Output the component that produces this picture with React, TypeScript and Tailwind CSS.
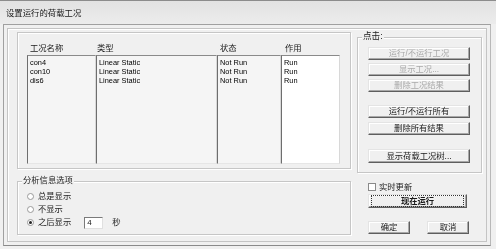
const FONT = '"Liberation Sans", "Noto Sans CJK SC", sans-serif'

type BtnProps = { label: string; disabled?: boolean; focused?: boolean; className?: string }

function WinButton({ label, disabled, focused, className = '' }: BtnProps) {
  return (
    <div
      className={`flex items-center justify-center border border-t-[#e4e4e4] border-l-[#e4e4e4] border-r-[#5e5e5e] border-b-[#5e5e5e] bg-[#f0f0f0] shadow-[inset_-1px_-1px_0_#a8a8a8,inset_1px_1px_0_#ffffff] ${className}`}
    >
      <div
        className={`flex h-full w-full items-center justify-center text-[8.3px] leading-none ${
          disabled ? 'text-[#a9a9a9]' : 'text-[#1a1a1a]'
        } ${focused ? 'm-[2px] border border-dotted border-[#333]' : ''}`}
      >
        {label}
      </div>
    </div>
  )
}

function Radio({ checked, label }: { checked?: boolean; label: string }) {
  return (
    <div className="flex h-[13px] items-center">
      <div className="ml-[9px] flex h-[7px] w-[7px] items-center justify-center rounded-full border border-[#9a9a9a] bg-white">
        {checked && <div className="h-[3px] w-[3px] rounded-full bg-[#222]" />}
      </div>
      <span className="ml-[4px] text-[8.3px] leading-none text-[#1a1a1a]">{label}</span>
    </div>
  )
}

const rows = [
  { name: 'con4', type: 'Linear Static', status: 'Not Run', action: 'Run' },
  { name: 'con10', type: 'Linear Static', status: 'Not Run', action: 'Run' },
  { name: 'dis6', type: 'Linear Static', status: 'Not Run', action: 'Run' },
]

const cols = [
  { key: 'name' as const, title: '工况名称', w: 'w-[69px]', pl: 'pl-[3px]', bg: 'bg-[#f5f5f5]' },
  { key: 'type' as const, title: '类型', w: 'w-[121px]', pl: 'pl-[1px]', bg: 'bg-[#f5f5f5]' },
  { key: 'status' as const, title: '状态', w: 'w-[64px]', pl: 'pl-[3px]', bg: 'bg-[#f5f5f5]' },
  { key: 'action' as const, title: '作用', w: 'w-[59px]', pl: 'pl-[4px]', bg: 'bg-white' },
]

export default function App() {
  return (
    <div
      className="h-[249px] w-[496px] overflow-hidden bg-[#f0f0f0] text-[#1a1a1a] grayscale"
      style={{ fontFamily: FONT }}
    >
      {/* title bar */}
      <div className="flex h-[24px] items-center border-t border-[#8c8c8c] bg-gradient-to-b from-[#e2e2e2] to-[#ececec] pl-[6px] pt-[2px] text-[8.4px] leading-none">
        设置运行的荷载工况
      </div>

      {/* dialog frames */}
      <div className="ml-[3px] h-[222px] w-[488px] border border-t-[#a0a0a0] border-l-[#a0a0a0] border-r-[#b8b8b8] border-b-[#8a8a8a]">
        <div className="ml-[3px] mt-[3px] flex h-[214px] w-[480px] border border-[#c4c4c4] shadow-[inset_1px_1px_0_#ffffff]">
          {/* left column */}
          <div className="ml-[9px] w-[334px]">
            <div className="mt-[3px] h-[137px] border border-[#c6c6c6] shadow-[inset_1px_1px_0_#ffffff,1px_1px_0_#ffffff]">
              <div className="ml-[9px] mt-[9px] flex">
                {cols.map((c) => (
                  <div key={c.key} className={c.w}>
                    <div className={`h-[13px] ${c.pl} text-[8.3px] leading-[13px]`}>{c.title}</div>
                    <div
                      className={`h-[109px] border border-t-[#8a8a8a] border-l-[#6e6e6e] border-r-[#d8d8d8] border-b-[#e6e6e6] ${c.bg} pl-[2px] pt-[2px]`}
                    >
                      {rows.map((r) => (
                        <div key={r.name} className="h-[9px] text-[7.4px] leading-[9px] whitespace-nowrap text-black">
                          {r[c.key]}
                        </div>
                      ))}
                    </div>
                  </div>
                ))}
              </div>
            </div>

            {/* analysis info options */}
            <div className="relative mt-[12px] h-[54px] border border-[#c6c6c6] shadow-[inset_1px_1px_0_#ffffff,1px_1px_0_#ffffff]">
              <span className="absolute -top-[6px] left-[4px] bg-[#f0f0f0] px-[1px] text-[8.3px] leading-none">
                分析信息选项
              </span>
              <div className="mt-[8px]">
                <Radio label="总是显示" />
                <Radio label="不显示" />
                <div className="flex items-center">
                  <Radio checked label="之后显示" />
                  <div className="ml-[13px] flex h-[12px] w-[19px] items-center border border-t-[#7a7a7a] border-l-[#7a7a7a] border-r-[#e0e0e0] border-b-[#e0e0e0] bg-white pl-[2px] text-[8px] leading-none">
                    4
                  </div>
                  <span className="ml-[9px] text-[8.3px] leading-none">秒</span>
                </div>
              </div>
            </div>
          </div>

          {/* right column */}
          <div className="ml-[6px] w-[125px]">
            <div className="relative mt-[8px] h-[136px] border border-[#c6c6c6] shadow-[inset_1px_1px_0_#ffffff,1px_1px_0_#ffffff]">
              <span className="absolute -top-[6px] left-[4px] bg-[#f0f0f0] px-[1px] text-[8.6px] leading-none">
                点击:
              </span>
              <div className="ml-[10px] flex w-[102px] flex-col">
                <WinButton label="运行/不运行工况" disabled className="mt-[9px] h-[13px]" />
                <WinButton label="显示工况..." disabled className="mt-[3px] h-[13px]" />
                <WinButton label="删除工况结果" disabled className="mt-[3px] h-[13px]" />
                <WinButton label="运行/不运行所有" className="mt-[13px] h-[13px]" />
                <WinButton label="删除所有结果" className="mt-[4px] h-[13px]" />
                <WinButton label="显示荷载工况树..." className="mt-[14px] h-[14px]" />
              </div>
            </div>

            <div className="ml-[11px] mt-[10px] flex h-[8px] items-center">
              <div className="h-[8px] w-[8px] border border-[#8a8a8a] bg-white" />
              <span className="ml-[3px] text-[8.3px] leading-none">实时更新</span>
            </div>
            <WinButton label="现在运行" focused className="ml-[11px] mt-[3px] h-[14px] w-[99px] font-bold" />
            <div className="ml-[11px] mt-[13px] flex w-[101px] justify-between">
              <WinButton label="确定" className="h-[13px] w-[42px]" />
              <WinButton label="取消" className="h-[13px] w-[42px]" />
            </div>
          </div>
        </div>
      </div>
    </div>
  )
}
